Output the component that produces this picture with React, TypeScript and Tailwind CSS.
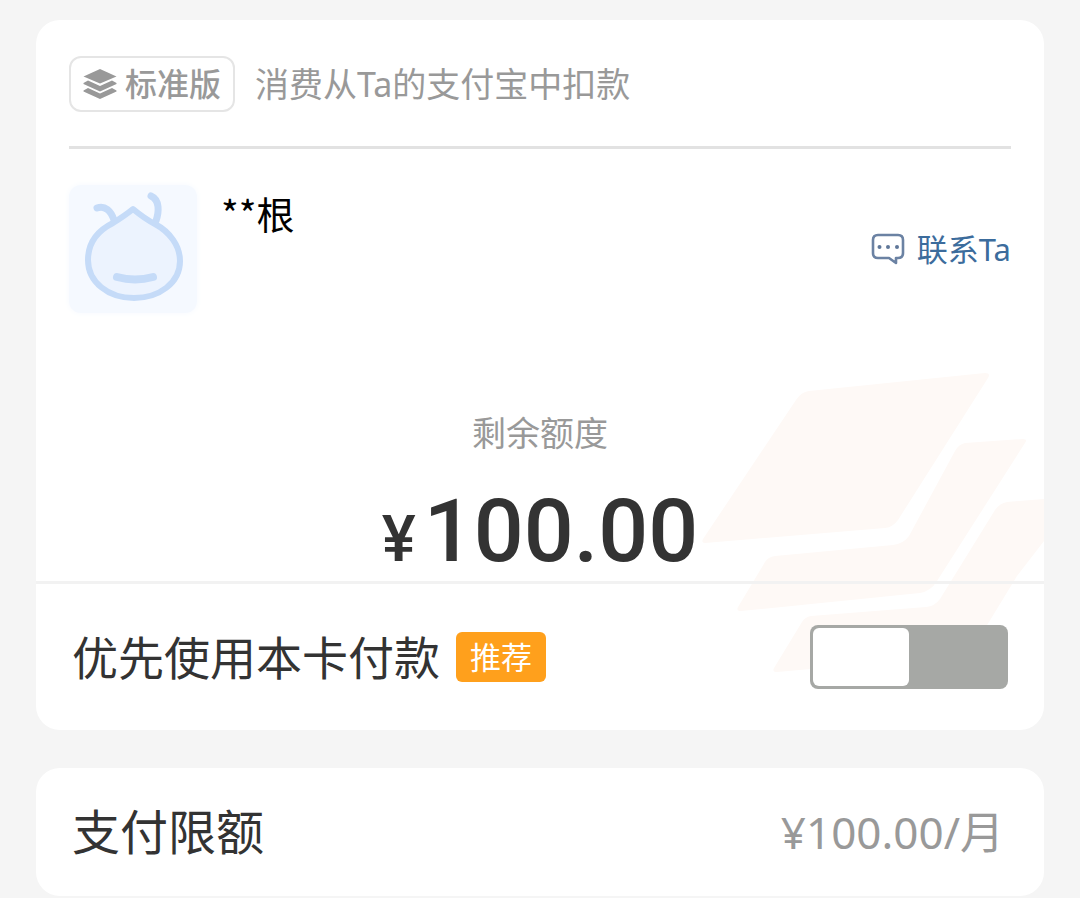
import { useState } from "react";

function LayersIcon() {
  return (
    <svg viewBox="0 0 34 30" className="w-[34px] h-[30px]" fill="#999999" aria-hidden="true">
      <path d="M17 0 33.5 7.5 17 14.5 .5 7.5Z" />
      <path d="M.5 14 5 11.5 17 17 29 11.5 33.5 14V15L17 22.5 .5 15Z" />
      <path d="M.5 21.5 5 19 17 24.5 29 19 33.5 21.5V22.5L17 30 .5 22.5Z" />
    </svg>
  );
}

function ChatIcon() {
  return (
    <svg viewBox="0 0 34 32" className="w-[34px] h-8" fill="none" aria-hidden="true">
      <path
        d="M7 2H27Q32 2 32 7V20Q32 25 27 25H25V30L18 25H7Q2 25 2 20V7Q2 2 7 2Z"
        stroke="#6b82a3"
        strokeWidth="2.6"
        strokeLinejoin="round"
      />
      <g fill="#5f7799">
        <circle cx="8.5" cy="14" r="2" />
        <circle cx="17" cy="14" r="2" />
        <circle cx="26" cy="14" r="2" />
      </g>
    </svg>
  );
}

function Avatar() {
  return (
    <div className="size-32 rounded-xl bg-[#f5f9ff] shadow-[0_0_6px_#f5f9ff]">
      <svg viewBox="0 0 128 128" className="size-32" fill="none" stroke="#c5dbf8" strokeLinecap="round" strokeLinejoin="round">
        <path
          d="M64 24C70 29 76 34 86 39C101 47 111 61 111 76C111 98 90 113 65 113C39 113 19 97 19 75C19 58 28 46 44 38C52 33 58 29 64 24Z"
          fill="#ecf3fe"
          strokeWidth="6"
        />
        <path d="M28 23C36 20 42 26 45 35" strokeWidth="7" />
        <path d="M82 11C91 15 90 27 87 36" strokeWidth="7" />
        <path d="M48 92Q66 97 84 92" strokeWidth="8" />
      </svg>
    </div>
  );
}

function Watermark() {
  return (
    <svg
      viewBox="700 370 345 305"
      className="absolute right-0 top-[350px] w-[345px] h-[305px]"
      fill="#fef9f6"
      aria-hidden="true"
    >
      <path d="M810 391 986 373Q992 373 989 378L899 520Q894 527 886 528L706 543Q702 543 704 539L797 400Q802 392 810 391Z" />
      <path d="M966 443 1024 439Q1029 439 1026 443L938 581Q932 591 921 593L742 611Q737 611 739 607L766 562Q769 557 776 556L894 545Q904 544 910 536L956 451Q960 444 966 443Z" />
      <path d="M1008 502 1045 499V541L1018 576 990 622 974 647Q968 655 958 656L778 672Q773 672 775 668L803 622Q806 617 812 616L927 607Q936 606 941 599L996 510Q1001 503 1008 502Z" />
    </svg>
  );
}

export default function App() {
  const [preferred, setPreferred] = useState(false);

  return (
    <main className="min-h-screen bg-[#f5f5f5] px-9 pt-5 font-['Noto_Sans','Noto_Sans_CJK_SC',sans-serif] text-[#333333]">
      <section className="relative overflow-hidden rounded-3xl bg-white">
        <Watermark />

        <div className="relative">
          {/* Card type */}
          <header className="mx-[33px] flex items-center gap-5 border-b-3 border-[#e2e2e2] pt-9 pb-[34px] text-[#999999]">
            <div className="flex h-14 items-center gap-2 rounded-xl border-2 border-[#e5e5e5] px-3">
              <LayersIcon />
              <span className="text-[32px] leading-10 font-medium">标准版</span>
            </div>
            <p className="text-[34px] leading-10">消费从Ta的支付宝中扣款</p>
          </header>

          {/* Owner */}
          <div className="mx-[33px] flex pt-9">
            <Avatar />
            <p className="ml-6 pt-1 font-['Noto_Sans_CJK_SC',sans-serif] text-[38px] leading-12 text-black">**根</p>
            <button type="button" className="ml-auto flex items-center gap-3 self-center text-[#3c6c9c]">
              <ChatIcon />
              <span className="text-[31px] leading-10">联系Ta</span>
            </button>
          </div>

          {/* Balance */}
          <div className="mt-24 border-b-3 border-[#f2f2f2] pb-1 text-center">
            <h2 className="text-[34px] leading-12 text-[#999999]">剩余额度</h2>
            <p className="mt-7 flex items-baseline justify-center gap-2 font-['Roboto',sans-serif] font-medium">
              <span className="text-[64px] leading-16">¥</span>
              <span className="text-[88px] leading-[92px]">100.00</span>
            </p>
          </div>

          {/* Preferred card switch */}
          <div className="flex items-center justify-between px-9 py-[41px]">
            <div className="flex items-center gap-4">
              <label htmlFor="preferred" className="text-[46px] leading-16">
                优先使用本卡付款
              </label>
              <span className="rounded-md bg-[#ffa01c] px-[14px] text-[31px] leading-[50px] text-white">推荐</span>
            </div>
            <input
              id="preferred"
              type="checkbox"
              role="switch"
              checked={preferred}
              onChange={() => setPreferred(!preferred)}
              className="h-16 w-[198px] cursor-pointer appearance-none rounded-lg bg-[#a6a8a5] p-[3px] before:block before:h-full before:w-1/2 before:rounded-md before:bg-white checked:bg-[#1677ff] checked:before:ml-auto"
            />
          </div>
        </div>
      </section>

      <section className="mt-[38px] flex h-32 items-center justify-between rounded-3xl bg-white pr-10 pl-9">
        <h2 className="text-[48px] leading-16">支付限额</h2>
        <p className="text-[44px] leading-16 text-[#999999]">¥100.00/月</p>
      </section>
    </main>
  );
}
